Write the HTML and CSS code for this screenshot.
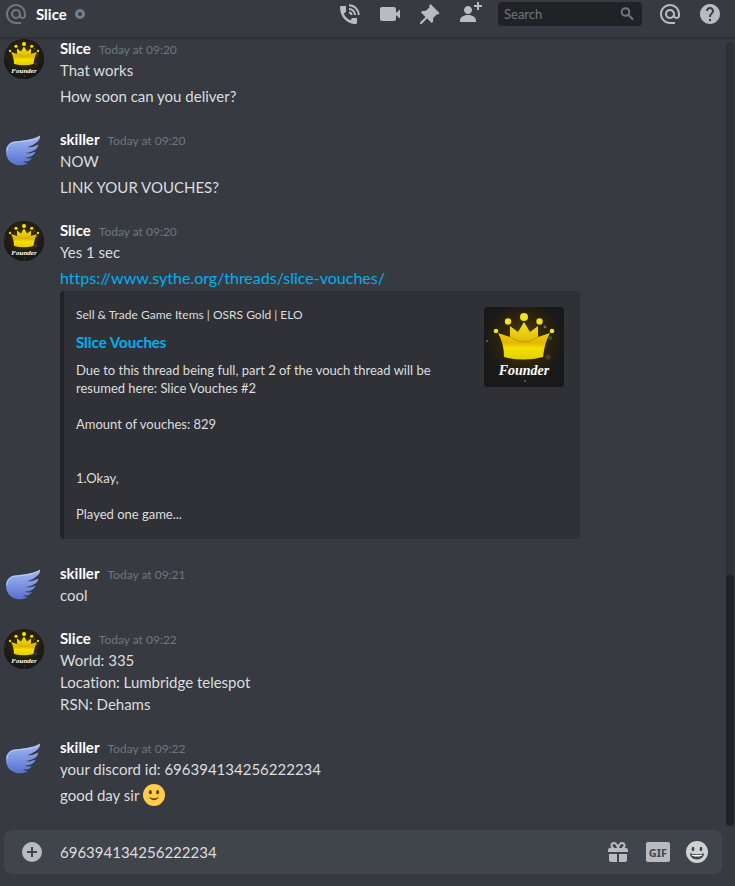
FILE: index.html
```
<!DOCTYPE html>
<html lang="en">
<head>
  <meta charset="UTF-8">
  <meta name="viewport" content="width=device-width, initial-scale=1.0">
  <title>Slice</title>
  <link rel="stylesheet" href="styles.css">
</head>
<body>
  <!-- shared artwork -->
  <svg class="defs" width="0" height="0" aria-hidden="true">
    <defs>
      <radialGradient id="glow" cx="50%" cy="42%" r="50%">
        <stop offset="0" stop-color="#5a4300"/>
        <stop offset="0.6" stop-color="#2c230a"/>
        <stop offset="1" stop-color="#19191a"/>
      </radialGradient>
      <linearGradient id="gold" x1="0" y1="0" x2="0" y2="1">
        <stop offset="0" stop-color="#f2e617"/>
        <stop offset="0.55" stop-color="#e0b800"/>
        <stop offset="0.7" stop-color="#f5e000"/>
        <stop offset="1" stop-color="#e3cf00"/>
      </linearGradient>
      <linearGradient id="blue" x1="0" y1="0" x2="0" y2="1">
        <stop offset="0" stop-color="#a5b8f2"/>
        <stop offset="0.5" stop-color="#7d97e4"/>
        <stop offset="1" stop-color="#5570cf"/>
      </linearGradient>
    </defs>
    <symbol id="crown" viewBox="0 0 80 80">
      <rect width="80" height="80" fill="#19191a"/>
      <rect width="80" height="80" fill="url(#glow)"/>
      <g fill="#6d6a66">
        <circle cx="66" cy="31" r="2" opacity=".6"/>
        <circle cx="61" cy="20" r="1.4"/>
        <circle cx="64" cy="50" r="2.5" opacity=".4"/>
        <circle cx="3" cy="34" r="1"/>
        <circle cx="41" cy="74" r="1"/>
        <circle cx="24" cy="66" r="1.5" opacity=".5"/>
      </g>
      <g fill="#f0e31a">
        <circle cx="40" cy="10" r="4"/>
        <circle cx="24" cy="14.5" r="3.2"/>
        <circle cx="55.5" cy="14.5" r="3.2"/>
        <circle cx="12" cy="24" r="2.3"/>
        <circle cx="68" cy="24" r="2.3"/>
      </g>
      <path fill="url(#gold)" d="M14 26L26 30V19L34 25L40 15L46 25L54 19V30L66 26C62 33 60 41 59 50Q40 55 20 50C20 41 18 33 14 26Z"/>
      <path fill="none" stroke="#c99700" stroke-width="1" d="M26 30Q33 35 40 35T54 30"/>
      <text class="art-text" x="40" y="68" text-anchor="middle">Founder</text>
    </symbol>
    <symbol id="wing" viewBox="0 0 40 40">
      <path fill="url(#blue)" d="M36 5.5C37 9 33 14 23 17.500C27 17.500 31 16.500 34.500 14.500C34 19 29 22 21.500 23C25 23.800 28.500 23 31.500 21.500C30 26 25.500 27.800 20.500 27.500C23 28.800 25.500 28.800 28 28C26 31.500 22.500 32 19 31C20.500 32.500 22 33 24 33C20 35.500 15 36 11 34.500C5 32.500 2 27.500 2 22C2 16 5 12.500 10 11.500C19 10.500 29 10 36 5.500Z"/>
      <path fill="none" stroke="#c3cff7" stroke-width="1" d="M3 21C3 16.500 6 13 10.500 12.300C19 11.500 29 10.500 35 7"/>
    </symbol>
  </svg>

  <header class="header">
    <svg class="icon at" viewBox="0 0 24 24" aria-hidden="true"><path d="M12 2C6.480 2 2 6.480 2 12s4.480 10 10 10h5v-2h-5c-4.340 0-8-3.660-8-8s3.660-8 8-8 8 3.660 8 8v1.430c0 .79-.71 1.570-1.500 1.570S17 14.220 17 13.430V12c0-2.760-2.240-5-5-5s-5 2.240-5 5 2.240 5 5 5c1.380 0 2.640-.56 3.540-1.470.65.89 1.770 1.470 2.960 1.470 1.970 0 3.500-1.600 3.500-3.570V12c0-5.520-4.480-10-10-10zm0 13c-1.660 0-3-1.340-3-3s1.340-3 3-3 3 1.340 3 3-1.340 3-3 3z"/></svg>
    <h1 class="title">Slice</h1>
    <span class="status" role="img" aria-label="Offline"></span>

    <div class="toolbar">
      <button class="tool" type="button" aria-label="Start voice call">
        <svg class="icon" viewBox="0 0 24 24"><path d="M3.500 4H8v6L5.800 11.500C6.800 14.500 9.500 17.200 12.500 18.200L14 16h5v4.500C19 21.500 18.500 22 17.500 22C9 22 2 15 2 5.500C2 4.500 2.500 4 3.500 4z"/><path class="waves" d="M11 3.300A9.700 9.700 0 0 1 20.700 13M11 7A6 6 0 0 1 17 13M11 10.500A2.500 2.500 0 0 1 13.500 13"/></svg>
      </button>
      <button class="tool" type="button" aria-label="Start video call">
        <svg class="icon" viewBox="0 0 24 24"><path d="M4 5h12c1.100 0 2 .9 2 2v3.500l1.500-.5V9.500L22 7.500v9l-2.500-2V14l-1.500-.5V17c0 1.100-.9 2-2 2H4c-1.100 0-2-.9-2-2V7c0-1.100.9-2 2-2z"/></svg>
      </button>
      <button class="tool" type="button" aria-label="Pinned messages">
        <svg class="icon" viewBox="0 0 24 24"><path d="M21.500 11L12.500 2l-1.400 1.400.7 1.700-3.900 3.700-3.600.1-1.400 1.400 4.600 4.600-5.500 5.500V22h1.600l5.500-5.500 4.600 4.600 1.400-1.400.1-3.600 3.700-3.900 1.200.2L21.500 11z"/></svg>
      </button>
      <button class="tool" type="button" aria-label="Add friends to DM">
        <svg class="icon" viewBox="0 0 24 24"><path d="M21 3V0h-2v3h-3v2h3v3h2V5h3V3h-3zM10 12c2.200 0 4-1.800 4-4s-1.800-4-4-4-4 1.800-4 4 1.800 4 4 4zm0 1c-5 0-8 2.500-8 5.500V20h16v-1.500c0-3-3-5.500-8-5.500z"/></svg>
      </button>
      <label class="search">
        <input class="search-input" type="text" placeholder="Search" aria-label="Search">
        <svg class="search-icon" viewBox="0 0 18 18" aria-hidden="true"><circle cx="7.500" cy="7" r="3.800"/><path d="M10.500 10l4.500 4.500"/></svg>
      </label>
      <button class="tool" type="button" aria-label="Mentions">
        <svg class="icon" viewBox="0 0 24 24"><path d="M12 2C6.480 2 2 6.480 2 12s4.480 10 10 10h5v-2h-5c-4.340 0-8-3.660-8-8s3.660-8 8-8 8 3.660 8 8v1.430c0 .79-.71 1.570-1.500 1.570S17 14.220 17 13.430V12c0-2.760-2.240-5-5-5s-5 2.240-5 5 2.240 5 5 5c1.380 0 2.640-.56 3.540-1.470.65.89 1.770 1.470 2.960 1.470 1.970 0 3.500-1.600 3.500-3.570V12c0-5.520-4.480-10-10-10zm0 13c-1.660 0-3-1.340-3-3s1.340-3 3-3 3 1.340 3 3-1.340 3-3 3z"/></svg>
      </button>
      <button class="tool" type="button" aria-label="Help">
        <svg class="icon" viewBox="0 0 24 24"><path d="M12 2C6.480 2 2 6.480 2 12s4.480 10 10 10 10-4.480 10-10S17.520 2 12 2zm1 17h-2v-2h2v2zm2.070-7.750l-.9.920C13.450 12.900 13 13.500 13 15h-2v-.5c0-1.100.450-2.100 1.170-2.830l1.240-1.260c.37-.36.590-.86.590-1.410 0-1.100-.9-2-2-2s-2 .9-2 2H8c0-2.210 1.790-4 4-4s4 1.790 4 4c0 .88-.36 1.680-.93 2.250z"/></svg>
      </button>
    </div>
  </header>

  <main class="chat">
    <ol class="messages">
      <li class="message">
        <svg class="avatar round" aria-hidden="true"><use href="#crown"/></svg>
        <div class="body">
          <h2 class="meta"><span class="name">Slice</span><time class="time">Today at 09:20</time></h2>
          <p class="text">That works</p>
          <p class="text">How soon can you deliver?</p>
        </div>
      </li>
      <li class="message">
        <svg class="avatar" aria-hidden="true"><use href="#wing"/></svg>
        <div class="body">
          <h2 class="meta"><span class="name">skiller</span><time class="time">Today at 09:20</time></h2>
          <p class="text">NOW</p>
          <p class="text">LINK YOUR VOUCHES?</p>
        </div>
      </li>
      <li class="message">
        <svg class="avatar round" aria-hidden="true"><use href="#crown"/></svg>
        <div class="body">
          <h2 class="meta"><span class="name">Slice</span><time class="time">Today at 09:20</time></h2>
          <p class="text">Yes 1 sec</p>
          <p class="text"><a class="link" href="https://www.sythe.org/threads/slice-vouches/">https://www.sythe.org/threads/slice-vouches/</a></p>
          <article class="embed">
            <div class="embed-body">
              <p class="provider">Sell &amp; Trade Game Items | OSRS Gold | ELO</p>
              <a class="embed-title" href="https://www.sythe.org/threads/slice-vouches/">Slice Vouches</a>
              <p class="description">Due to this thread being full, part 2 of the vouch thread will be resumed here: Slice Vouches #2

Amount of vouches: 829


1.Okay,

Played one game...</p>
            </div>
            <svg class="thumb" aria-hidden="true"><use href="#crown"/></svg>
          </article>
        </div>
      </li>
      <li class="message">
        <svg class="avatar" aria-hidden="true"><use href="#wing"/></svg>
        <div class="body">
          <h2 class="meta"><span class="name">skiller</span><time class="time">Today at 09:21</time></h2>
          <p class="text">cool</p>
        </div>
      </li>
      <li class="message">
        <svg class="avatar round" aria-hidden="true"><use href="#crown"/></svg>
        <div class="body">
          <h2 class="meta"><span class="name">Slice</span><time class="time">Today at 09:22</time></h2>
          <p class="text">World: 335<br>Location: Lumbridge telespot<br>RSN: Dehams</p>
        </div>
      </li>
      <li class="message">
        <svg class="avatar" aria-hidden="true"><use href="#wing"/></svg>
        <div class="body">
          <h2 class="meta"><span class="name">skiller</span><time class="time">Today at 09:22</time></h2>
          <p class="text">your discord id: 696394134256222234</p>
          <p class="text with-emoji">good day sir
            <svg class="emoji" viewBox="0 0 36 36" role="img" aria-label="slight smile"><circle cx="18" cy="18" r="18" fill="#ffcc4d"/><path fill="#664500" d="M10.500 21.800c0 .1 2.500 4.700 7.500 4.700s7.500-4.600 7.500-4.700c.1-.2 0-.4-.1-.6-.2-.1-.4-.1-.6 0 0 0-2.600 2.300-6.800 2.300s-6.800-2.300-6.800-2.300c-.2-.2-.4-.2-.6 0-.1.200-.2.400-.1.600z"/><ellipse cx="12" cy="13.500" rx="2.500" ry="3.500" fill="#664500"/><ellipse cx="24" cy="13.500" rx="2.500" ry="3.500" fill="#664500"/></svg>
          </p>
        </div>
      </li>
    </ol>
    <div class="scrollbar"><div class="scroll-thumb"></div></div>
  </main>

  <form class="composer">
    <button class="tool" type="button" aria-label="Upload a file">
      <svg class="icon" viewBox="0 0 24 24"><path d="M12 2a10 10 0 1 0 0 20 10 10 0 0 0 0-20zm5 11h-4v4h-2v-4H7v-2h4V7h2v4h4v2z"/></svg>
    </button>
    <input class="composer-input" type="text" value="696394134256222234" aria-label="Message @Slice">
    <button class="tool" type="button" aria-label="Send a gift">
      <svg class="icon" viewBox="0 0 24 24"><path d="M3 14h8v8H5c-1.100 0-2-.9-2-2v-6zm10 0h8v6c0 1.100-.9 2-2 2h-6v-8zM4 8h16c1.100 0 2 .9 2 2v2H2v-2c0-1.100.9-2 2-2z"/><path class="bow" d="M12 8C11 4.500 9.500 3 8 3S5.500 4.200 5.500 5.500 6.500 8 8 8M12 8c1-3.500 2.500-5 4-5s2.500 1.200 2.500 2.500S17.500 8 16 8"/></svg>
    </button>
    <button class="gif" type="button">GIF</button>
    <button class="tool" type="button" aria-label="Pick an emoji">
      <svg class="smile" viewBox="0 0 22 22"><circle cx="11" cy="11" r="11" fill="#d0d1d3"/><ellipse cx="7" cy="8" rx="1.400" ry="2.200" fill="#40444b"/><ellipse cx="15" cy="8" rx="1.400" ry="2.200" fill="#40444b"/><path fill="#40444b" d="M4 12.300Q11 14 18 12.300C18 16 15 18.500 11 18.500S4 16 4 12.300z"/><path fill="#fff" d="M5.500 13.400Q11 14.600 16.500 13.400Q16 15.500 11 15.500T5.500 13.400z"/></svg>
    </button>
  </form>
</body>
</html>
```

FILE: styles.css
```
* {
  box-sizing: border-box;
}

body {
  margin: 0;
  height: 100vh;
  display: flex;
  flex-direction: column;
  overflow: hidden;
  background: #373a41;
  color: #dcddde;
  font-family: Lato, "Open Sans", sans-serif;
  font-size: 15px;
  line-height: 22px;
  font-variant-ligatures: none;
}

h1, h2, p, ol {
  margin: 0;
  padding: 0;
  font-size: inherit;
}

button {
  padding: 0;
  border: 0;
  background: none;
  color: inherit;
  cursor: pointer;
}

input {
  border: 0;
  outline: 0;
  background: none;
  color: inherit;
  font: inherit;
}

svg {
  display: block;
}

.defs {
  position: absolute;
}

.art-text {
  font: italic bold 14px "Liberation Serif", serif;
  fill: #fff;
}

.icon {
  width: 24px;
  height: 24px;
  fill: #b9bbbe;
}

.tool {
  flex: none;
}

.waves,
.bow {
  fill: none;
  stroke: #b9bbbe;
  stroke-width: 2;
}

/* header */
.header {
  flex: none;
  display: flex;
  align-items: center;
  padding: 2px 13px 11px 4px;
  border-bottom: 2px solid #2e3035;
}

.at {
  flex: none;
  fill: #72767d;
}

.title {
  margin-left: 8px;
  color: #fff;
  font-weight: 700;
}

.status {
  width: 10px;
  height: 10px;
  margin-left: 8px;
  border: 3px solid #747f8d;
  border-radius: 50%;
}

.toolbar {
  display: flex;
  gap: 16px;
  margin-left: auto;
}

.search {
  display: flex;
  align-items: center;
  width: 144px;
  height: 24px;
  padding: 0 6px;
  border-radius: 4px;
  background: #202225;
}

.search-input {
  flex: 1;
  min-width: 0;
  padding: 0;
  font-size: 13px;
}

.search-input::placeholder {
  color: #72767d;
  opacity: 1;
}

.search-icon {
  width: 18px;
  height: 18px;
  fill: none;
  stroke: #72767d;
  stroke-width: 2;
}

/* messages */
.chat {
  position: relative;
  flex: 1;
  min-height: 0;
  display: flex;
  flex-direction: column;
  justify-content: flex-end;
  overflow: hidden;
}

.messages {
  display: flex;
  flex-direction: column;
  gap: 21px;
  padding: 0 16px 24px 4px;
  list-style: none;
}

.message {
  display: flex;
  gap: 16px;
}

.avatar {
  flex: none;
  width: 40px;
  height: 40px;
  margin-top: 2px;
}

.round {
  border-radius: 50%;
}

.body {
  flex: 1;
  min-width: 0;
}

.meta {
  display: flex;
  align-items: baseline;
  gap: 8px;
}

.name {
  color: #fff;
  font-weight: 700;
}

.time {
  color: #72767d;
  font-size: 12px;
  font-weight: 400;
  line-height: 16px;
}

.text + .text {
  margin-top: 4px;
}

.with-emoji {
  display: flex;
  gap: 4px;
}

.emoji {
  width: 22px;
  height: 22px;
}

.link,
.embed-title {
  color: #00aff4;
  text-decoration: none;
}

.link {
  display: block;
  font-size: 16px;
}

.link:hover,
.embed-title:hover {
  text-decoration: underline;
}

.embed {
  display: flex;
  gap: 16px;
  max-width: 520px;
  margin: 2px 0;
  padding: 16px 16px 16px 12px;
  border-left: 4px solid #202225;
  border-radius: 4px;
  background: #2f3136;
}

.embed-body {
  flex: 1;
  min-width: 0;
}

.provider {
  font-size: 12px;
  line-height: 16px;
}

.embed-title {
  display: block;
  margin: 8px 0;
  font-weight: 700;
}

.description {
  font-size: 13px;
  line-height: 18px;
  white-space: pre-line;
}

.thumb {
  flex: none;
  width: 80px;
  height: 80px;
  border-radius: 4px;
}

.scrollbar {
  position: absolute;
  top: 3px;
  right: 1px;
  bottom: 4px;
  width: 8px;
  display: flex;
  align-items: flex-end;
  border-radius: 4px;
  background: #2f3136;
}

.scroll-thumb {
  width: 100%;
  height: 32%;
  border-radius: 4px;
  background: #202225;
}

/* message box */
.composer {
  flex: none;
  display: flex;
  align-items: center;
  gap: 16px;
  height: 44px;
  margin: 0 13px 12px 4px;
  padding: 0 14px 0 16px;
  border-radius: 8px;
  background: #40444b;
}

.composer-input {
  flex: 1;
  min-width: 0;
  padding: 0;
}

.gif {
  width: 24px;
  height: 20px;
  border-radius: 2px;
  background: #b9bbbe;
  color: #40444b;
  font: 700 11px "Noto Sans", sans-serif;
}

.smile {
  width: 22px;
  height: 22px;
}
```
